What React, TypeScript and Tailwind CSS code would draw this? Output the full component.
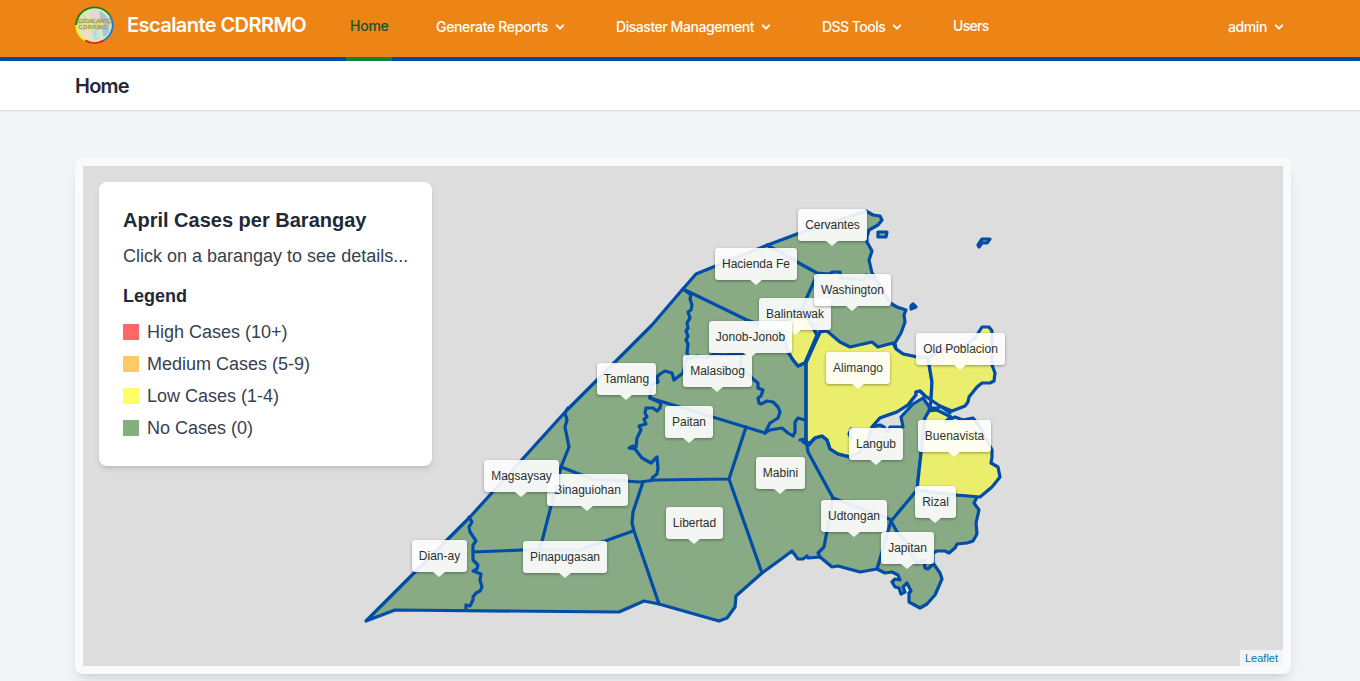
import React from "react";

const NAV_FONT = "font-['Inter','Liberation_Sans',sans-serif]";

const land =
  "366,621 470,517 566,411 652,325 682,290 696,274 765,246 797,234 866,211 873,215 880,216 882,220 878,225 869,230 867,237 867,242 872,251 869,260 872,273 877,280 890,303 897,307 906,310 904,315 905,322 901,333 895,343 896,349 903,354 917,357 928,358 931,380 931,400 929,411 925,418 921,453 917,490 957,495 978,495 974,503 979,510 976,523 977,534 973,541 967,543 957,544 955,548 949,553 945,551 937,551 933,553 933,563 940,573 942,579 935,595 927,604 920,608 909,602 909,593 911,591 907,583 903,587 905,592 901,594 899,588 895,587 892,582 895,579 900,580 898,575 892,572 885,573 877,569 860,572 838,566 832,567 820,557 808,558 807,556 803,559 798,559 792,551 780,560 762,573 736,596 735,607 727,618 719,621 659,604 644,601 619,612 395,610";

const water =
  "931,400 925,396 920,391 916,392 916,395 908,405 897,412 880,418 872,427 880,425 884,427 887,432 890,427 903,427 901,417 913,404 923,398 930,408";

const yellowAreas = [
  "820,332 827,331 840,342 850,347 872,342 878,347 893,343 896,349 903,354 917,357 928,358 932,382 931,400 925,396 920,391 916,392 916,395 908,405 897,412 880,418 872,427 868,440 858,453 850,457 838,454 830,449 827,440 822,436 815,438 809,445 806,440 806,363",
  "928,358 938,352 948,348 965,346 975,338 982,327 989,327 992,331 992,365 995,373 994,381 990,383 982,383 977,387 969,397 968,402 965,406 952,411 940,406 931,400 932,382",
  "929,411 937,410 943,413 951,417 946,421 955,417 963,420 973,418 980,427 992,450 992,457 991,463 998,467 1000,477 992,487 980,497 957,495 917,490 921,453 925,418",
  "802,308 817,335 805,363 798,366 793,360 788,352 785,340 775,328 787,320",
];

const borders = [
  "469,517 472,522 469,527 470,532 472,535 476,541 473,545 473,560 478,565 477,569 473,571 481,574 480,580 482,587 480,591 476,593 473,597 473,600 470,606 466,605 466,610",
  "473,552 523,550 580,550 633,531",
  "540,549 561,467 569,447 565,427 567,420 565,413 568,408",
  "561,467 592,479 640,482 655,480 729,479 746,427",
  "643,482 633,512 632,523 634,531 659,604",
  "729,479 762,573",
  "650,398 661,403 660,408 657,411 653,408 646,408 645,413 647,417 644,419 646,424 639,426 641,430 637,438 636,447 633,446 629,448 635,449 642,458 651,463 657,457 658,468 657,474 652,478",
  "650,398 765,433",
  "650,398 651,385 658,382 657,377 660,374 665,371 672,373 674,380 683,373 687,357",
  "683,289 691,295 690,299 692,305 691,310 688,312 690,318 687,323 688,328 686,331 688,336 686,340 688,344 687,353 690,359 697,356 706,358 714,354 723,355 742,354 740,367 753,379 758,383 758,388 763,390 761,396 758,398 759,403 761,404 767,401 773,402 778,407 780,412 778,418 770,423 765,433",
  "765,433 770,430 782,428 788,433 793,436 795,432 795,422 798,418 805,420",
  "806,363 806,440 808,445 815,438 822,436 827,440 830,449 838,454 850,457",
  "800,440 805,439 808,445 803,442",
  "806,440 808,452 833,498 892,520 917,490",
  "833,498 824,547 818,553 820,557",
  "891,521 877,569",
  "891,521 897,532 905,540 910,552 917,563 924,560 925,568 928,569 933,564",
  "767,245 797,262 817,273 829,274 833,272 840,272 841,278 863,280 866,275 875,280",
  "817,275 802,308 817,335",
  "683,289 747,320 765,326 787,320 802,308",
  "775,328 785,340 788,352 793,360 798,366 805,363 820,332",
  "851,429 849,434 851,438",
];

const islands = [
  "878,232 887,232 886,237 878,237",
  "982,239 990,239 987,243 982,243 979,247 978,245",
  "913,304 916,307 911,309 911,306",
];

const labels = [
  { name: "Cervantes", box: "left-[715px] top-[43px] w-[69px]" },
  { name: "Hacienda Fe", box: "left-[632px] top-[82px] w-[82px]" },
  { name: "Balintawak", box: "left-[676px] top-[132px] w-[72px]" },
  { name: "Washington", box: "left-[731px] top-[108px] w-[77px]" },
  { name: "Malasibog", box: "left-[600px] top-[189px] w-[69px]" },
  { name: "Jonob-Jonob", box: "left-[626px] top-[155px] w-[83px]" },
  { name: "Tamlang", box: "left-[514px] top-[197px] w-[59px]" },
  { name: "Paitan", box: "left-[582px] top-[240px] w-[48px]" },
  { name: "Alimango", box: "left-[743px] top-[186px] w-[64px]" },
  { name: "Old Poblacion", box: "left-[833px] top-[167px] w-[89px]" },
  { name: "Langub", box: "left-[766px] top-[262px] w-[54px]" },
  { name: "Buenavista", box: "left-[835px] top-[254px] w-[73px]" },
  { name: "Rizal", box: "left-[832px] top-[320px] w-[41px]" },
  { name: "Udtongan", box: "left-[738px] top-[334px] w-[66px]" },
  { name: "Japitan", box: "left-[798px] top-[366px] w-[53px]" },
  { name: "Mabini", box: "left-[673px] top-[291px] w-[49px]" },
  { name: "Libertad", box: "left-[583px] top-[341px] w-[57px]" },
  { name: "Binaguiohan", box: "left-[464px] top-[308px] w-[81px]" },
  { name: "Magsaysay", box: "left-[401px] top-[294px] w-[75px]" },
  { name: "Dian-ay", box: "left-[329px] top-[374px] w-[55px]" },
  { name: "Pinapugasan", box: "left-[440px] top-[375px] w-[84px]" },
];

const legend = [
  { text: "High Cases (10+)", color: "bg-[#ff6666]" },
  { text: "Medium Cases (5-9)", color: "bg-[#ffc966]" },
  { text: "Low Cases (1-4)", color: "bg-[#ffff66]" },
  { text: "No Cases (0)", color: "bg-[#84af80]" },
];

function Chevron() {
  return (
    <svg
      className="ml-1 size-4 shrink-0"
      viewBox="0 0 20 20"
      fill="currentColor"
      stroke="currentColor"
      strokeWidth="0.4"
    >
      <path
        fillRule="evenodd"
        clipRule="evenodd"
        d="M5.293 7.293a1 1 0 011.414 0L10 10.586l3.293-3.293a1 1 0 111.414 1.414l-4 4a1 1 0 01-1.414 0l-4-4a1 1 0 010-1.414z"
      />
    </svg>
  );
}

function Logo() {
  return (
    <svg className="ml-[75px] mt-1.5 h-[38px] w-[39px] shrink-0" viewBox="0 0 38 38" preserveAspectRatio="none">
      <circle cx="19" cy="19" r="18" fill="#d9ecb4" />
      <path d="M24 5l6 4 4 9-1 9-5 5-2-9 2-7-6-5z" fill="#a3c8e4" />
      <path d="M16 3l7 1 2 7-7 3-5-5z" fill="#e7d4d4" />
      <path d="M5 23l8 1 3 6-3 4-7-5z" fill="#f3dcc4" />
      <path d="M15 25l8-1 2 9-7 2z" fill="#bfe6dc" />
      <path d="M8 9l4 6 8-2 3 8-4 5 2 8M25 5l1 9 7 4M6 24l9-3 8 2" fill="none" stroke="#d89ab8" strokeWidth=".6" />
      <g fill="none" strokeWidth="1.8">
        <path d="M1.200 19A17.800 17.800 0 0 1 34 9.600" stroke="#16801f" />
        <path d="M34 9.600A17.800 17.800 0 0 1 28 34.400" stroke="#1f78c8" />
        <path d="M28 34.400A17.800 17.800 0 0 1 10 34.400" stroke="#ee1c1c" />
        <path d="M10 34.400A17.800 17.800 0 0 1 1.200 19" stroke="#f7ee1a" />
      </g>
      <g
        fontFamily="Liberation Sans, sans-serif"
        fontWeight="700"
        fontSize="5.500"
        textAnchor="middle"
        fill="#cdb02c"
        stroke="#a39c58"
        strokeWidth=".35"
      >
        <text x="19" y="17.500" textLength="32">ESCALANTE</text>
        <text x="17.500" y="23.500" textLength="28">CDRRMO</text>
      </g>
    </svg>
  );
}

function Header() {
  return (
    <header
      className={`flex h-[61px] items-start border-b-4 border-[#004da8] bg-[#ed8416] text-sm font-medium text-white ${NAV_FONT}`}
    >
      <Logo />
      <div className="ml-[13px] mt-[11px] w-[219px] shrink-0 whitespace-nowrap text-[20px] font-semibold leading-7 tracking-[-0.57px]">
        Escalante CDRRMO
      </div>
      <a className="h-[61px] w-[46px] shrink-0 border-b-4 border-[#15803d] px-1 pt-4 leading-5 tracking-[-0.25px] text-[#14532d]">
        Home
      </a>
      <div className="ml-11 mt-[17px] flex w-[180px] shrink-0 items-center whitespace-nowrap leading-5">
        <span className="w-[112px] tracking-[-0.33px]">Generate Reports</span>
        <Chevron />
      </div>
      <div className="mt-[17px] flex w-[206px] shrink-0 items-center whitespace-nowrap leading-5">
        <span className="w-[138px] tracking-[-0.45px]">Disaster Management</span>
        <Chevron />
      </div>
      <div className="mt-[17px] flex w-[131px] shrink-0 items-center whitespace-nowrap leading-5">
        <span className="w-[63px] tracking-[-0.52px]">DSS Tools</span>
        <Chevron />
      </div>
      <div className="mt-4 leading-5 tracking-[-0.7px]">Users</div>
      <div className="ml-auto mr-[73px] mt-[17px] flex items-center leading-5">
        <span className="w-[39px] tracking-[-0.4px]">admin</span>
        <Chevron />
      </div>
    </header>
  );
}

function BarangayMap() {
  return (
    <svg className="block h-[500px] w-[1200px]" viewBox="83 166 1200 500">
      <g stroke="#004da8" strokeWidth="3.2" strokeLinecap="round" strokeLinejoin="round">
        <polygon points={land} fill="#88aa84" />
        {yellowAreas.map((p) => (
          <polygon key={p} points={p} fill="#ebed6d" />
        ))}
        <polygon points={water} fill="#dddddd" />
        <polyline points="930,408 938,408 940,406 950,413" fill="none" />
        {borders.map((p) => (
          <polyline key={p} points={p} fill="none" />
        ))}
        {islands.map((p) => (
          <polygon key={p} points={p} fill="#88aa84" />
        ))}
      </g>
    </svg>
  );
}

export default function App() {
  return (
    <div className="h-[681px] overflow-hidden bg-[#f3f4f6] font-['Liberation_Sans',Arial,sans-serif]">
      <Header />
      <div className={`h-[49px] bg-white pl-[75px] pt-[11px] shadow-sm ${NAV_FONT}`}>
        <h1 className="text-[20px] font-semibold leading-7 tracking-[-0.75px] text-[#1f2937]">Home</h1>
      </div>
      <main className="ml-[75px] mt-12 w-[1216px] rounded-lg bg-[#f9fafb] p-2 shadow-lg">
        <div className="relative h-[500px] overflow-hidden bg-[#dddddd]">
          <BarangayMap />
          {labels.map((l) => (
            <div
              key={l.name}
              className={`absolute h-8 whitespace-nowrap rounded-[3px] bg-white text-center text-[12px] leading-8 text-[#222222] opacity-90 shadow-[0_1px_3px_rgba(0,0,0,0.4)] ${l.box}`}
            >
              {l.name}
              <span className="absolute left-1/2 top-full -ml-[6.5px] border-x-[6px] border-t-[5px] border-x-transparent border-t-white" />
            </div>
          ))}
          <section className="absolute left-4 top-4 h-[284px] w-[333px] rounded-lg bg-white p-6 text-[18px] leading-6 text-[#374151] shadow-md">
            <h2 className="text-[20px] font-bold leading-7 text-[#1f2937]">April Cases per Barangay</h2>
            <p className="mt-2.5 whitespace-nowrap">Click on a barangay to see details...</p>
            <h3 className="mt-4 font-bold text-[#1f2937]">Legend</h3>
            <ul className="mt-3 flex flex-col gap-2">
              {legend.map((item) => (
                <li key={item.text} className="flex items-center">
                  <span className={`mr-2 size-4 ${item.color}`} />
                  {item.text}
                </li>
              ))}
            </ul>
          </section>
          <div className="absolute bottom-0 right-0 h-4 w-[43px] bg-[#f4f4f4] pl-[5px] text-[11px] leading-4 text-[#0078a8]">
            Leaflet
          </div>
        </div>
      </main>
    </div>
  );
}
